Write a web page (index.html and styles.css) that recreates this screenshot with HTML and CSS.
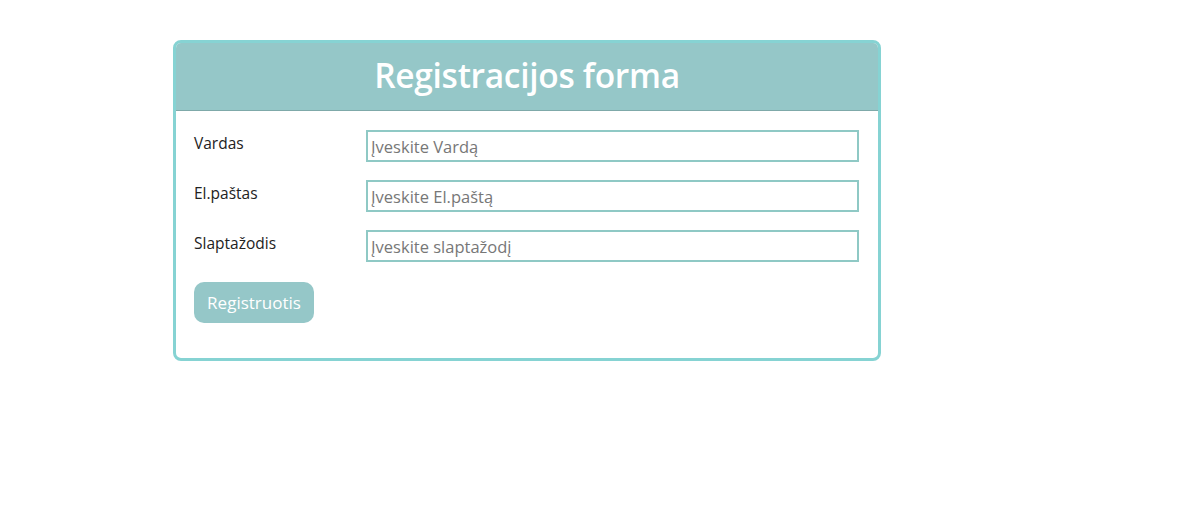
FILE: index.html
```html
<!DOCTYPE html>
<html lang="lt">
<head>
<meta charset="UTF-8">
<meta name="viewport" content="width=device-width, initial-scale=1.0">
<title>Registracijos forma</title>
<link rel="stylesheet" href="styles.css">
</head>
<body>

<div class="card">
  <div class="card-header">
    <h1>Registracijos forma</h1>
  </div>

  <form class="card-body">
    <div class="row">
      <label for="vardas">Vardas</label>
      <input type="text" id="vardas" placeholder="Įveskite Vardą">
    </div>
    <div class="row">
      <label for="email">El.paštas</label>
      <input type="email" id="email" placeholder="Įveskite El.paštą">
    </div>
    <div class="row">
      <label for="pass">Slaptažodis</label>
      <input type="password" id="pass" placeholder="Įveskite slaptažodį">
    </div>
    <button type="button">Registruotis</button>
  </form>
</div>

</body>
</html>
```

FILE: styles.css
```css
body {
  font-family: "Open Sans", "Noto Sans", sans-serif;
  margin: 0;
  padding: 40px 0 0 173px;
  background: #ffffff;
}

.card {
  width: 702px;
  border: 3px solid #86d3d3;
  border-radius: 8px;
  overflow: hidden;
}

.card-header {
  background: #95c7c8;
  border-bottom: 1px solid #7fa9a9;
  height: 68px;
  box-sizing: border-box;
  padding-bottom: 4px;
  display: flex;
  align-items: center;
  justify-content: center;
}

h1 {
  margin: 0;
  color: #ffffff;
  font-size: 33.5px;
  font-weight: 600;
  letter-spacing: -0.3px;
}

.card-body {
  padding: 19px 19px 35px 18px;
}

.row {
  display: flex;
  align-items: flex-start;
  margin-bottom: 18px;
}

label {
  width: 172px;
  font-size: 15.5px;
  color: #222;
  padding-top: 2px;
}

input {
  flex: 1;
  height: 32px;
  box-sizing: border-box;
  border: 2px solid #8fc9c5;
  padding: 0 3px;
  font-family: inherit;
  font-size: 16.5px;
  color: #333;
  outline: none;
}

input::placeholder {
  color: #777;
}

button {
  margin-top: 2px;
  width: 120px;
  height: 41px;
  background-color: #95c7c8;
  color: white;
  border: none;
  border-radius: 10px;
  font-family: inherit;
  font-size: 17px;
  cursor: pointer;
}
```
